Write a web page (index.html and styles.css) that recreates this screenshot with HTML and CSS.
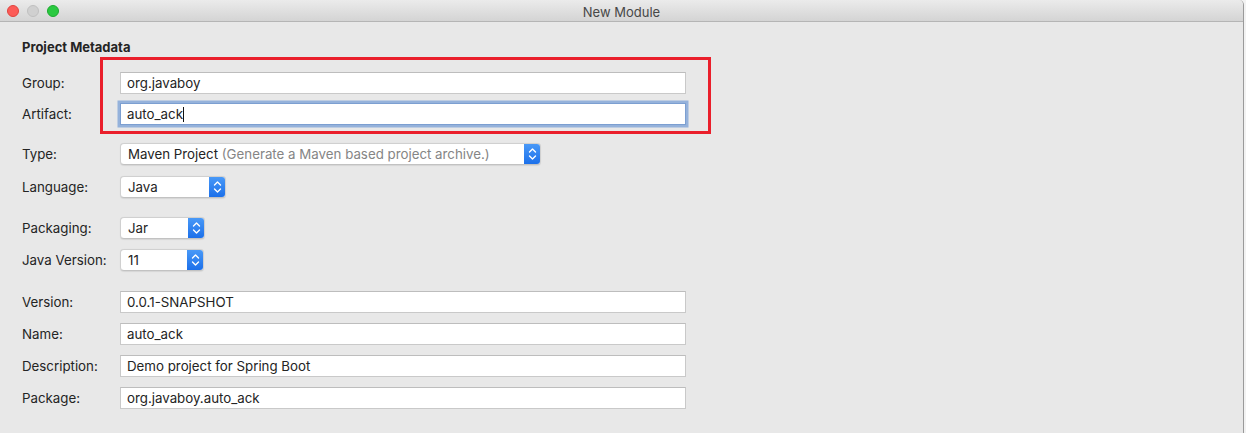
FILE: index.html
```html
<!DOCTYPE html>
<html>
<head>
<meta charset="utf-8">
<link rel="stylesheet" href="styles.css">
</head>
<body>
<div class="window">
  <div class="titlebar">
    <div class="lights">
      <span class="light red"></span>
      <span class="light gray"></span>
      <span class="light green"></span>
    </div>
    <div class="title">New Module</div>
  </div>
  <div class="content">
    <div class="heading">Project Metadata</div>
    <div class="section s1">
      <div class="row"><label class="lbl">Group:</label><div class="field">org.javaboy</div></div>
      <div class="row"><label class="lbl">Artifact:</label><div class="field focused">auto_ack<span class="caret"></span></div></div>
    </div>
    <div class="section s2">
      <div class="row"><label class="lbl">Type:</label>
        <div class="select w-type"><span class="sel-text">Maven Project <span class="hint">(Generate a Maven based project archive.)</span></span>
          <span class="stepper"><svg width="9" height="14" viewBox="0 0 9 14"><path d="M1.5 5 L4.5 2 L7.5 5 M1.5 9 L4.5 12 L7.5 9" fill="none" stroke="#fff" stroke-width="1.4" stroke-linecap="round" stroke-linejoin="round"/></svg></span>
        </div>
      </div>
      <div class="row"><label class="lbl">Language:</label>
        <div class="select w-lang"><span class="sel-text">Java</span>
          <span class="stepper"><svg width="9" height="14" viewBox="0 0 9 14"><path d="M1.5 5 L4.5 2 L7.5 5 M1.5 9 L4.5 12 L7.5 9" fill="none" stroke="#fff" stroke-width="1.4" stroke-linecap="round" stroke-linejoin="round"/></svg></span>
        </div>
      </div>
    </div>
    <div class="section s3">
      <div class="row"><label class="lbl">Packaging:</label>
        <div class="select w-pack"><span class="sel-text">Jar</span>
          <span class="stepper"><svg width="9" height="14" viewBox="0 0 9 14"><path d="M1.5 5 L4.5 2 L7.5 5 M1.5 9 L4.5 12 L7.5 9" fill="none" stroke="#fff" stroke-width="1.4" stroke-linecap="round" stroke-linejoin="round"/></svg></span>
        </div>
      </div>
      <div class="row"><label class="lbl">Java Version:</label>
        <div class="select w-java"><span class="sel-text">11</span>
          <span class="stepper"><svg width="9" height="14" viewBox="0 0 9 14"><path d="M1.5 5 L4.5 2 L7.5 5 M1.5 9 L4.5 12 L7.5 9" fill="none" stroke="#fff" stroke-width="1.4" stroke-linecap="round" stroke-linejoin="round"/></svg></span>
        </div>
      </div>
    </div>
    <div class="section s4">
      <div class="row"><label class="lbl">Version:</label><div class="field">0.0.1-SNAPSHOT</div></div>
      <div class="row"><label class="lbl">Name:</label><div class="field">auto_ack</div></div>
      <div class="row"><label class="lbl">Description:</label><div class="field">Demo project for Spring Boot</div></div>
      <div class="row"><label class="lbl">Package:</label><div class="field">org.javaboy.auto_ack</div></div>
    </div>
    <div class="highlight"></div>
  </div>
</div>
</body>
</html>
```

FILE: styles.css
```css
html, body {
  margin: 0;
  padding: 0;
  background: #f2f2f2;
}
body {
  font-family: Inter, "Noto Sans", "Liberation Sans", sans-serif;
  font-size: 13.3px;
  color: #242424;
}
.window {
  width: 1243px;
  height: 433px;
  border-right: 1px solid #9a9a9a;
  background: #e8e8e8;
  border-top-right-radius: 5px;
  overflow: hidden;
}
.titlebar {
  height: 22px;
  box-sizing: border-box;
  background: linear-gradient(#ebebeb, #d4d4d4);
  border-bottom: 1px solid #b5b5b5;
  display: flex;
  align-items: center;
  position: relative;
}
.lights {
  display: flex;
  gap: 8px;
  padding-left: 7px;
  padding-top: 1px;
}
.light {
  width: 12px;
  height: 12px;
  border-radius: 50%;
  box-sizing: border-box;
}
.light.red { background: #fc5b57; border: 1px solid #e0443e; }
.light.gray { background: #d0d0d0; border: 1px solid #c0c0c0; }
.light.green { background: #2ac940; border: 1px solid #1daa2f; }
.title {
  position: absolute;
  left: 0;
  right: 0;
  text-align: center;
  color: #474747;
  font-size: 13px;
  top: 4px;
}
.content {
  position: relative;
  padding: 17px 0 0 22px;
}
.heading {
  font-weight: 700;
  font-size: 13px;
  height: 16px;
  line-height: 16px;
  margin-bottom: 17px;
}
.section {
  display: flex;
  flex-direction: column;
  gap: 10px;
  margin-bottom: 19px;
}
.s1 { gap: 9px; margin-bottom: 18px; }
.s2 { gap: 11px; margin-bottom: 19px; }
.s3 { gap: 10px; margin-bottom: 20px; }
.row {
  display: flex;
  align-items: center;
  height: 22px;
}
.lbl {
  width: 98px;
  flex: none;
}
.field {
  width: 566px;
  height: 22px;
  box-sizing: border-box;
  background: #fff;
  border: 1px solid #c9c9c9;
  border-top-color: #bdbdbd;
  padding-left: 6px;
  line-height: 20px;
}
.field.focused {
  border-color: #7c9fd1;
  box-shadow: 0 0 0 2.5px rgba(122, 160, 215, 0.75);
}
.caret {
  display: inline-block;
  width: 1px;
  height: 15px;
  background: #111;
  vertical-align: -3px;
}
.select {
  height: 22px;
  box-sizing: border-box;
  background: #fff;
  border: 1px solid #d0d0d0;
  border-bottom-color: #c2c2c2;
  border-radius: 4px;
  display: flex;
  align-items: center;
  justify-content: space-between;
  overflow: hidden;
  box-shadow: 0 0.5px 1px rgba(0,0,0,0.08);
}
.sel-text {
  padding-left: 7px;
  white-space: nowrap;
}
.hint { color: #858585; }
.w-type { width: 421px; }
.w-lang { width: 106px; }
.w-pack { width: 85px; }
.w-java { width: 84px; }
.stepper {
  width: 17px;
  height: 22px;
  margin-right: -1px;
  background: linear-gradient(#4b9bf8, #1a6ee9);
  border-radius: 0 4px 4px 0;
  display: flex;
  align-items: center;
  justify-content: center;
}
.highlight {
  position: absolute;
  left: 100px;
  top: 35px;
  width: 611px;
  height: 77px;
  box-sizing: border-box;
  border: 3px solid #ea1f2b;
}
```
